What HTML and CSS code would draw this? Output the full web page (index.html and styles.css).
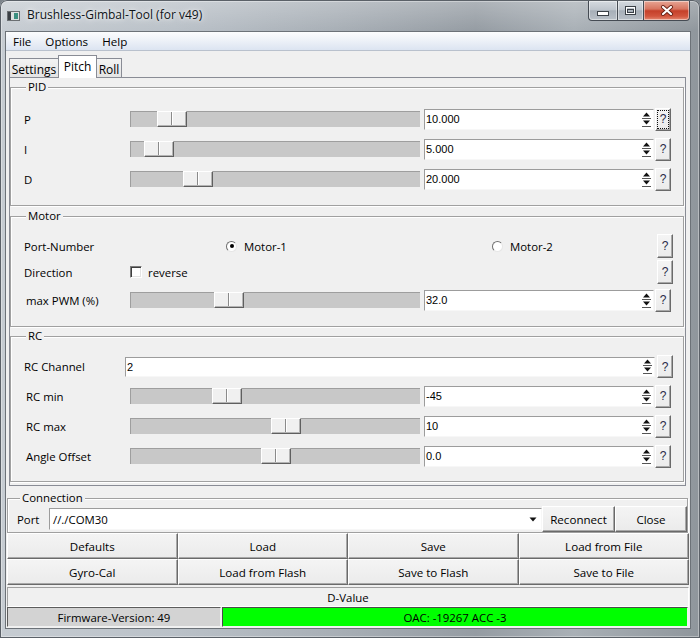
FILE: index.html
```html
<!DOCTYPE html>
<html>
<head>
<meta charset="utf-8">
<title>Brushless-Gimbal-Tool</title>
<link rel="stylesheet" href="styles.css">
</head>
<body>
<div class="window">
  <div class="titlebar">
    <svg class="appicon" width="13" height="10" viewBox="0 0 13 10">
      <rect x="0.5" y="0.5" width="12" height="9" fill="#dde0e0" stroke="#6b6f72"/>
      <rect x="1" y="1" width="3" height="8" fill="#3a3f44"/>
      <rect x="7" y="2" width="4" height="6" fill="#3b8f80"/>
    </svg>
    <span class="title">Brushless-Gimbal-Tool (for v49)</span>
    <div class="caption">
      <span class="cap min"><svg width="12" height="5" viewBox="0 0 12 5"><rect x="0.5" y="0.5" width="11" height="4" fill="#fff" stroke="#3a4047"/></svg></span>
      <span class="cap max"><svg width="11" height="9" viewBox="0 0 11 9"><rect x="0.5" y="0.5" width="10" height="8" fill="none" stroke="#3a4047"/><rect x="1.5" y="1.5" width="8" height="6" fill="none" stroke="#fff"/><rect x="2.5" y="3.5" width="6" height="3" fill="none" stroke="#3a4047"/></svg></span>
      <span class="cap close"><svg width="14" height="11" viewBox="0 0 14 11"><path d="M3 2 L11 9 M11 2 L3 9" stroke="#6a2316" stroke-width="4" stroke-linecap="round"/><path d="M3 2 L11 9 M11 2 L3 9" stroke="#fff" stroke-width="2.2" stroke-linecap="round"/></svg></span>
    </div>
  </div>

  <div class="client">
    <div class="menubar"><span>File</span><span>Options</span><span>Help</span></div>
    <div class="main">
      <div class="tabbar">
        <span class="tab t-settings">Settings</span>
        <span class="tab t-pitch">Pitch</span>
        <span class="tab t-roll">Roll</span>
      </div>
      <div class="pane">
        <div class="group g-pid">
          <div class="gtitle">PID</div>
          <div class="rows r-pid">
            <div class="row">
              <span class="lbl">P</span>
              <div class="slider"><span class="handle" style="margin-left:27px"></span></div>
              <div class="spin"><span class="val">10.000</span><svg class="arr" width="11" height="19" viewBox="0 0 11 19"><path d="M5.5 2.5 L9 6.5 H2 Z" fill="#111"/><rect x="1" y="8" width="9" height="1" fill="#555"/><path d="M2 10.5 H9 L5.5 14.5 Z" fill="#111"/><rect x="1" y="16" width="9" height="1" fill="#555"/></svg></div>
              <span class="btn help focus">?</span>
            </div>
            <div class="row">
              <span class="lbl">I</span>
              <div class="slider"><span class="handle" style="margin-left:14px"></span></div>
              <div class="spin"><span class="val">5.000</span><svg class="arr" width="11" height="19" viewBox="0 0 11 19"><path d="M5.5 2.5 L9 6.5 H2 Z" fill="#111"/><rect x="1" y="8" width="9" height="1" fill="#555"/><path d="M2 10.5 H9 L5.5 14.5 Z" fill="#111"/><rect x="1" y="16" width="9" height="1" fill="#555"/></svg></div>
              <span class="btn help">?</span>
            </div>
            <div class="row">
              <span class="lbl">D</span>
              <div class="slider"><span class="handle" style="margin-left:53px"></span></div>
              <div class="spin"><span class="val">20.000</span><svg class="arr" width="11" height="19" viewBox="0 0 11 19"><path d="M5.5 2.5 L9 6.5 H2 Z" fill="#111"/><rect x="1" y="8" width="9" height="1" fill="#555"/><path d="M2 10.5 H9 L5.5 14.5 Z" fill="#111"/><rect x="1" y="16" width="9" height="1" fill="#555"/></svg></div>
              <span class="btn help">?</span>
            </div>
          </div>
        </div>

        <div class="group g-motor">
          <div class="gtitle">Motor</div>
          <div class="rows r-motor">
            <div class="row mrow h24">
              <span class="lbl">Port-Number</span>
              <span class="radio r1"><span class="rb on"></span>Motor-1</span>
              <span class="radio r2"><span class="rb"></span>Motor-2</span>
              <span class="btn help mhelp">?</span>
            </div>
            <div class="row mrow h24 gap2">
              <span class="lbl">Direction</span>
              <span class="check"><span class="cb"></span>reverse</span>
              <span class="btn help mhelp">?</span>
            </div>
            <div class="row gap1">
              <span class="lbl ind">max PWM (%)</span>
              <div class="slider"><span class="handle" style="margin-left:84px"></span></div>
              <div class="spin"><span class="val">32.0</span><svg class="arr" width="11" height="19" viewBox="0 0 11 19"><path d="M5.5 2.5 L9 6.5 H2 Z" fill="#111"/><rect x="1" y="8" width="9" height="1" fill="#555"/><path d="M2 10.5 H9 L5.5 14.5 Z" fill="#111"/><rect x="1" y="16" width="9" height="1" fill="#555"/></svg></div>
              <span class="btn help">?</span>
            </div>
          </div>
        </div>

        <div class="group g-rc">
          <div class="gtitle">RC</div>
          <div class="rows r-rc">
            <div class="row h29">
              <span class="lbl lbl-rc">RC Channel</span>
              <div class="spin spin-wide"><span class="val">2</span><svg class="arr" width="11" height="19" viewBox="0 0 11 19"><path d="M5.5 2.5 L9 6.5 H2 Z" fill="#111"/><rect x="1" y="8" width="9" height="1" fill="#555"/><path d="M2 10.5 H9 L5.5 14.5 Z" fill="#111"/><rect x="1" y="16" width="9" height="1" fill="#555"/></svg></div>
              <span class="btn help rchelp">?</span>
            </div>
            <div class="row">
              <span class="lbl ind">RC min</span>
              <div class="slider"><span class="handle" style="margin-left:82px"></span></div>
              <div class="spin"><span class="val">-45</span><svg class="arr" width="11" height="19" viewBox="0 0 11 19"><path d="M5.5 2.5 L9 6.5 H2 Z" fill="#111"/><rect x="1" y="8" width="9" height="1" fill="#555"/><path d="M2 10.5 H9 L5.5 14.5 Z" fill="#111"/><rect x="1" y="16" width="9" height="1" fill="#555"/></svg></div>
              <span class="btn help">?</span>
            </div>
            <div class="row">
              <span class="lbl ind">RC max</span>
              <div class="slider"><span class="handle" style="margin-left:141px"></span></div>
              <div class="spin"><span class="val">10</span><svg class="arr" width="11" height="19" viewBox="0 0 11 19"><path d="M5.5 2.5 L9 6.5 H2 Z" fill="#111"/><rect x="1" y="8" width="9" height="1" fill="#555"/><path d="M2 10.5 H9 L5.5 14.5 Z" fill="#111"/><rect x="1" y="16" width="9" height="1" fill="#555"/></svg></div>
              <span class="btn help">?</span>
            </div>
            <div class="row">
              <span class="lbl ind">Angle Offset</span>
              <div class="slider"><span class="handle" style="margin-left:131px"></span></div>
              <div class="spin"><span class="val">0.0</span><svg class="arr" width="11" height="19" viewBox="0 0 11 19"><path d="M5.5 2.5 L9 6.5 H2 Z" fill="#111"/><rect x="1" y="8" width="9" height="1" fill="#555"/><path d="M2 10.5 H9 L5.5 14.5 Z" fill="#111"/><rect x="1" y="16" width="9" height="1" fill="#555"/></svg></div>
              <span class="btn help">?</span>
            </div>
          </div>
        </div>
      </div>

      <div class="group conn">
        <div class="gtitle">Connection</div>
        <div class="conn-row">
          <span class="port-lbl">Port</span>
          <div class="combo"><span class="val">//./COM30</span><svg width="8" height="5" viewBox="0 0 8 5"><path d="M0.5 0.5 H7.5 L4 4.5 Z" fill="#111"/></svg></div>
          <span class="btn cbtn reconnect">Reconnect</span>
          <span class="btn cbtn closeb">Close</span>
        </div>
      </div>

      <div class="grid">
        <span class="btn gbtn">Defaults</span>
        <span class="btn gbtn">Load</span>
        <span class="btn gbtn">Save</span>
        <span class="btn gbtn">Load from File</span>
        <span class="btn gbtn">Gyro-Cal</span>
        <span class="btn gbtn">Load from Flash</span>
        <span class="btn gbtn">Save to Flash</span>
        <span class="btn gbtn">Save to File</span>
      </div>

      <div class="dval">D-Value</div>

      <div class="status">
        <div class="fw">Firmware-Version: 49</div>
        <div class="oac">OAC: -19267 ACC -3</div>
      </div>
    </div>
  </div>
</div>
</body>
</html>
```

FILE: styles.css
```css
* { box-sizing: border-box; }
html, body { margin: 0; padding: 0; }
body {
  width: 700px;
  height: 638px;
  overflow: hidden;
  background: #7d848b;
  font-family: "Open Sans", "Noto Sans", sans-serif;
  font-size: 11.4px;
  color: #000;
}

.window {
  width: 700px;
  height: 638px;
  display: flex;
  flex-direction: column;
  border-radius: 7px 7px 0 0;
  background:
    linear-gradient(180deg, rgba(255,255,255,0.25) 0px, rgba(255,255,255,0) 31px),
    linear-gradient(90deg, #c6ccd2 0%, #bac1c8 25%, #a8afb6 48%, #959ca3 68%, #a9b0b6 82%, #8f969c 100%);
  box-shadow: inset 0 0 0 1px #5b6168, inset 0 0 0 2px rgba(255,255,255,0.35);
}

/* ---------- title bar ---------- */
.titlebar {
  height: 31px;
  flex: none;
  display: flex;
  align-items: flex-start;
}
.appicon { flex: none; margin: 11px 0 0 7px; }
.title {
  margin: 7px 0 0 7px;
  line-height: 16px;
  font-size: 12px;
  color: #0f1418;
  text-shadow: 0 0 7px rgba(255,255,255,0.95), 0 0 3px rgba(255,255,255,0.7);
}
.caption {
  margin: 1px 10px 0 auto;
  display: flex;
  height: 20px;
}
.cap {
  height: 20px;
  display: flex;
  align-items: center;
  justify-content: center;
  border: 1px solid #454b53;
  border-top: none;
  box-shadow: inset 0 0 0 1px rgba(255,255,255,0.45);
  background: linear-gradient(#d5dae0, #bec5cd 45%, #a7afb8 52%, #b9c0c8);
}
.cap.min { width: 29px; border-right: none; border-radius: 0 0 0 4px; }
.cap.min svg { margin-top: 5px; }
.cap.max { width: 26px; border-right: none; }
.cap.close {
  width: 47px;
  border-radius: 0 0 4px 0;
  background: linear-gradient(#e7a594, #d77560 42%, #c5402a 52%, #d2553d 80%, #e48a73);
}

/* ---------- client ---------- */
.client {
  flex: 1;
  margin: 0 9px 9px 5px;
  background: #f0f0f0;
  border: 1px solid #6c7278;
  display: flex;
  flex-direction: column;
}
.menubar {
  height: 19px;
  flex: none;
  display: flex;
  align-items: center;
  background: linear-gradient(#fcfdfe, #eef2f8 45%, #dce4f1);
  border-bottom: 1px solid #b9c1cd;
}
.menubar span { padding: 0 7px; line-height: 18px; font-size: 11.6px; padding-top: 1px; }

.main {
  flex: 1;
  display: flex;
  flex-direction: column;
  padding: 0 1px;
}

/* ---------- tabs ---------- */
.tabbar {
  height: 26px;
  flex: none;
  display: flex;
  align-items: flex-end;
  padding-left: 2px;
}
.tab {
  height: 19px;
  display: flex;
  align-items: center;
  justify-content: center;
  padding-top: 2px;
  font-size: 12px;
  border: 1px solid #898c95;
  border-bottom: none;
  background: linear-gradient(#f3f3f3, #e4e4e4);
}
.t-settings { width: 49px; border-right: none; }
.t-pitch {
  width: 39px;
  height: 23px;
  margin-bottom: -1px;
  padding-top: 0;
  padding-bottom: 1px;
  background: #fff;
  position: relative;
  z-index: 1;
}
.t-roll { width: 25px; border-left: none; }

.pane {
  flex: none;
  margin: 0 3px 0 2px;
  border: 1px solid #898c95;
  background: #f0f0f0;
  padding: 0 1px 3px 0;
  display: flex;
  flex-direction: column;
}

/* ---------- group boxes ---------- */
.group {
  border: 1px solid #a0a0a0;
  box-shadow: inset 1px 1px 0 #fff, 1px 1px 0 #fff;
  padding: 0 0 11px 13px;
}
.gtitle {
  display: table;
  margin: -9px 0 0 2px;
  padding: 0 2px;
  line-height: 16px;
  background: #f0f0f0;
}
.g-pid { margin-top: 9px; }
.g-motor { margin-top: 10px; }
.g-rc { margin-top: 9px; padding-bottom: 10px; }
.r-pid { margin-top: 9px; }
.r-motor { margin-top: 10px; }
.r-rc { margin-top: 8px; }

.row {
  display: flex;
  align-items: center;
  height: 30px;
}
.row.h24 { height: 24px; }
.row.h29 { height: 29px; }
.row.gap2 { margin-top: 2px; }
.row.gap1 { margin-top: 1px; }
.mrow { padding-right: 10px; }

.lbl { width: 106px; flex: none; white-space: nowrap; }
.lbl.ind { padding-left: 2px; }
.lbl-rc { width: 101px; }

.slider {
  width: 290px;
  height: 16px;
  flex: none;
  display: flex;
  background: #c8c8c8;
  box-shadow: inset 1px 1px 0 #9e9e9e;
}
.handle {
  width: 30px;
  height: 16px;
  flex: none;
  border: 1px solid;
  border-color: #ffffff #5f5f5f #5f5f5f #ffffff;
  background: linear-gradient(90deg, #f0f0f0 0 13px, #8a8a8a 13px 14px, #ffffff 14px 15px, #f0f0f0 15px);
  box-shadow: inset -1px -1px 0 #b4b4b4;
}

.spin {
  width: 230px;
  height: 21px;
  flex: none;
  margin-left: 4px;
  display: flex;
  align-items: center;
  background: #fff;
  border: 1px solid;
  border-color: #9c9c9c #f7f7f7 #f7f7f7 #9c9c9c;
  font-family: "Liberation Sans", Arial, sans-serif;
  font-size: 11px;
}
.spin-wide { width: 530px; margin-left: 0; height: 20px; }
.val { flex: 1; padding-left: 1px; white-space: nowrap; }
.arr { flex: none; margin-right: 1px; }

.btn {
  display: flex;
  align-items: center;
  justify-content: center;
  background: linear-gradient(#f4f4f4, #ebebeb);
  border: 1px solid;
  border-color: #ffffff #6a6a6a #6a6a6a #ffffff;
  box-shadow: inset -1px -1px 0 #a8a8a8;
  white-space: nowrap;
}
.help {
  width: 16px;
  height: 23px;
  flex: none;
  margin-left: 1px;
  font-family: "Liberation Sans", Arial, sans-serif;
  font-size: 12px;
  color: #2a2a48;
}
.help.focus { outline: 1px dotted #111; outline-offset: -3px; }
.mhelp { margin-left: auto; height: 24px; }
.rchelp { margin-left: 2px; }

.radio { display: flex; align-items: center; gap: 7px; flex: none; }
.r1 { margin-left: 96px; width: 266px; }
.rb {
  width: 11px;
  height: 11px;
  border-radius: 50%;
  background: #fff;
  border: 1px solid;
  border-color: #6f6f6f #e6e6e6 #e6e6e6 #6f6f6f;
  display: flex;
  align-items: center;
  justify-content: center;
}
.rb.on::after {
  content: "";
  width: 4px;
  height: 4px;
  border-radius: 50%;
  background: #000;
}
.check { display: flex; align-items: center; gap: 6px; }
.cb {
  width: 12px;
  height: 12px;
  background: #fff;
  border: 1px solid;
  border-color: #7c7c7c #ffffff #ffffff #7c7c7c;
  box-shadow: inset 1px 1px 0 #3f3f3f, inset -1px -1px 0 #e3e3e3;
}

/* ---------- connection ---------- */
.conn {
  margin: 12px 1px 0 0;
  padding: 0 0 0 9px;
}
.conn .gtitle { margin-left: 3px; }
.conn-row {
  display: flex;
  align-items: center;
  height: 26px;
}
.port-lbl { width: 32px; flex: none; }
.combo {
  width: 493px;
  height: 22px;
  flex: none;
  display: flex;
  align-items: center;
  background: #fff;
  border: 1px solid;
  border-color: #9c9c9c #f7f7f7 #f7f7f7 #9c9c9c;
  padding: 0 4px 0 2px;
}
.combo svg { flex: none; }
.cbtn { height: 26px; flex: none; font-size: 11.6px; }
.reconnect { width: 73px; }
.closeb { width: 72px; }

/* ---------- buttons grid ---------- */
.grid {
  display: grid;
  grid-template-columns: repeat(4, 1fr);
  grid-auto-rows: 26px;
}
.gbtn { font-size: 11.6px; }

.dval {
  margin-top: 2px;
  height: 20px;
  display: flex;
  align-items: center;
  justify-content: center;
  border: 1px solid;
  border-color: #a0a0a0 #ffffff #ffffff #a0a0a0;
}

.status {
  height: 20px;
  display: flex;
  gap: 1px;
}
.fw {
  width: 214px;
  display: flex;
  align-items: center;
  justify-content: center;
  background: #d3d3d3;
  border: 1px solid;
  border-color: #5c5c5c #f0f0f0 #f0f0f0 #5c5c5c;
}
.oac {
  flex: 1;
  margin-right: 1px;
  display: flex;
  align-items: center;
  justify-content: center;
  background: #00ff00;
  border: 1px solid;
  border-color: #4a4a4a #f0f0f0 #f0f0f0 #4a4a4a;
}
```
